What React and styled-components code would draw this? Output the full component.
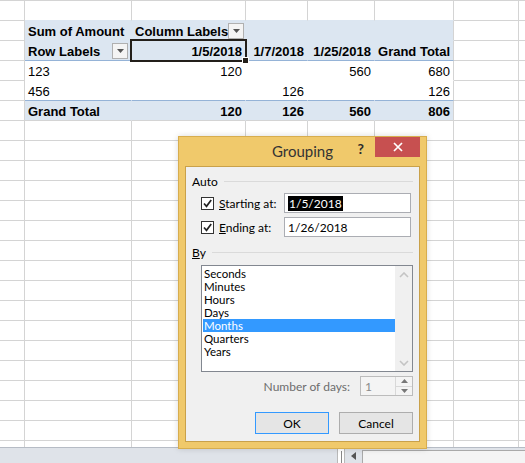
import React from "react";
import styled, { createGlobalStyle } from "styled-components";

const GlobalStyle = createGlobalStyle`
  html, body {
    margin: 0;
    padding: 0;
    background: #fff;
  }
`;

const GRID = "#d4d4d4";
const PIVOT = "#dce6f1";
const PIVOT_LINE = "#95b3d7";
const COLS = [25, 107, 114, 62, 67, 79, 65, 200];

// pivot rows: [cells B..F], each cell {t, bold, right, drop, sel}
const ROWS = [
  { kind: "top" },
  {
    kind: "head",
    cells: [
      { t: "Sum of Amount", bold: true },
      { t: "Column Labels", bold: true, drop: true },
      {},
      {},
      {},
    ],
  },
  {
    kind: "labels",
    cells: [
      { t: "Row Labels", bold: true, drop: true },
      { t: "1/5/2018", bold: true, right: true, sel: true },
      { t: "1/7/2018", bold: true, right: true },
      { t: "1/25/2018", bold: true, right: true },
      { t: "Grand Total", bold: true, right: true },
    ],
  },
  {
    kind: "data",
    cells: [{ t: "123" }, { t: "120", right: true }, {}, { t: "560", right: true }, { t: "680", right: true }],
  },
  {
    kind: "data2",
    cells: [{ t: "456" }, {}, { t: "126", right: true }, {}, { t: "126", right: true }],
  },
  {
    kind: "total",
    cells: [
      { t: "Grand Total", bold: true },
      { t: "120", bold: true, right: true },
      { t: "126", bold: true, right: true },
      { t: "560", bold: true, right: true },
      { t: "806", bold: true, right: true },
    ],
  },
];

const ITEMS = ["Seconds", "Minutes", "Hours", "Days", "Months", "Quarters", "Years"];

const Screen = styled.div`
  position: relative;
  width: 525px;
  height: 463px;
  overflow: hidden;
  display: flex;
  flex-direction: column;
  font-family: "Liberation Sans", Arial, sans-serif;
`;

const Sheet = styled.div`
  height: 447px;
  overflow: hidden;
  border-top: 1px solid ${GRID};
  box-sizing: border-box;
`;

const Row = styled.div`
  display: flex;
  height: 20px;
`;

const Cell = styled.div`
  position: relative;
  flex: 0 0 ${(p) => p.$w}px;
  height: 20px;
  box-sizing: border-box;
  border-right: 1px solid ${(p) => p.$br || GRID};
  border-bottom: 1px solid ${(p) => p.$bb || GRID};
  background: ${(p) => p.$bg || "#fff"};
  display: flex;
  align-items: center;
  justify-content: ${(p) => (p.$right ? "flex-end" : "flex-start")};
  padding: 1px 3px 0 3px;
  font-size: 13px;
  font-weight: ${(p) => (p.$bold ? 700 : 400)};
  color: #000;
  white-space: nowrap;
`;

const DropButton = styled.div`
  margin-left: auto;
  margin-right: ${(p) => p.$mr}px;
  width: 16px;
  height: 16px;
  box-sizing: border-box;
  border: 1px solid #b0b0b0;
  background: #f4f4f4;
  display: flex;
  align-items: center;
  justify-content: center;
  svg {
    display: block;
  }
`;

const Selection = styled.div`
  position: absolute;
  z-index: 2;
  left: -2px;
  top: -2px;
  right: -2px;
  bottom: -2px;
  border: 2px solid #231f1a;
  pointer-events: none;
  &::after {
    content: "";
    position: absolute;
    right: -4px;
    bottom: -4px;
    width: 5px;
    height: 5px;
    background: #231f1a;
    border: 1px solid #fff;
  }
`;

const BottomBar = styled.div`
  height: 16px;
  box-sizing: border-box;
  border-top: 1px solid #b6bcc5;
  background: #dfe3e9;
  display: flex;
  align-items: stretch;
  padding-left: 337px;
`;

const SplitHandle = styled.div`
  width: 8px;
  box-sizing: border-box;
  background: #fff;
  border: 1px solid #b9b9b9;
  border-bottom: none;
  display: flex;
  justify-content: center;
  &::before {
    content: "";
    width: 1px;
    margin-top: 2px;
    background: #888;
  }
`;

const ScrollLeft = styled.div`
  width: 17px;
  display: flex;
  align-items: center;
  justify-content: center;
`;

const Track = styled.div`
  flex: 1;
  margin-top: 2px;
  background: #f4f4f4;
  border-left: 1px solid #a9a9a9;
  border-top: 1px solid #a9a9a9;
`;

/* ---------- dialog ---------- */

const Dialog = styled.div`
  position: absolute;
  z-index: 5;
  left: 178px;
  top: 136px;
  width: 249px;
  height: 313px;
  box-sizing: border-box;
  background: #f0c96b;
  border: 1px solid #d7ad4e;
  display: flex;
  flex-direction: column;
  font-family: "Segoe UI", Lato, "Liberation Sans", sans-serif;
  font-size: 12px;
  color: #000;
  box-shadow: 0 0 6px rgba(0, 0, 0, 0.15);
`;

const TitleBar = styled.div`
  height: 29px;
  display: grid;
  grid-template-columns: 1fr auto 1fr;
  align-items: start;
`;

const Title = styled.div`
  font-size: 15px;
  color: #333;
  padding-top: 5px;
`;

const TitleButtons = styled.div`
  display: flex;
  justify-content: flex-end;
  align-items: flex-start;
  padding-right: 6px;
`;

const Help = styled.div`
  font-size: 14px;
  font-weight: 700;
  color: #2b2b2b;
  padding-top: 3px;
  margin-right: 11px;
`;

const Close = styled.div`
  width: 45px;
  height: 20px;
  background: #c75050;
  display: flex;
  align-items: center;
  justify-content: center;
`;

const Body = styled.div`
  flex: 1;
  margin: 0 6px 6px 6px;
  background: #f0f0f0;
  border: 1px solid #c9a14a;
  display: flex;
  flex-direction: column;
  padding: 7px 6px 0 6px;
`;

const GroupHead = styled.div`
  display: flex;
  align-items: center;
  height: 14px;
  margin-top: ${(p) => p.$mt}px;
  &::after {
    content: "";
    flex: 1;
    margin-left: 6px;
    border-top: 1px solid #dadada;
  }
`;

const U = styled.span`
  text-decoration: underline;
`;

const CheckRow = styled.div`
  display: flex;
  align-items: center;
  height: 20px;
  margin-top: ${(p) => p.$mt}px;
  padding-left: 9px;
`;

const Check = styled.div`
  width: 13px;
  height: 13px;
  box-sizing: border-box;
  border: 1px solid #333;
  background: #fff;
  margin-right: 5px;
  svg {
    display: block;
  }
`;

const CheckLabel = styled.div`
  width: 65px;
`;

const TextBox = styled.div`
  width: 127px;
  height: 20px;
  box-sizing: border-box;
  border: 1px solid #abadb3;
  background: #fff;
  display: flex;
  align-items: center;
  padding-left: 3px;
`;

const Highlight = styled.span`
  background: #000;
  color: #fff;
  padding: 0 1px;
`;

const ListBox = styled.div`
  margin: 6px 0 0 9px;
  height: 107px;
  box-sizing: border-box;
  border: 1px solid #828790;
  background: #fff;
  display: flex;
`;

const Items = styled.div`
  flex: 1;
  padding: 1px 0 0 1px;
`;

const Item = styled.div`
  height: 13px;
  line-height: 13px;
  font-size: 11.5px;
  padding-left: 1px;
  overflow: hidden;
  background: ${(p) => (p.$active ? "#3399ff" : "transparent")};
  color: ${(p) => (p.$active ? "#fff" : "#000")};
`;

const ScrollBar = styled.div`
  width: 17px;
  background: #f0f0f0;
  display: flex;
  flex-direction: column;
  justify-content: space-between;
  align-items: center;
  padding: 6px 0 5px;
`;

const DaysRow = styled.div`
  display: flex;
  align-items: center;
  justify-content: flex-end;
  margin-top: 4px;
  height: 20px;
`;

const DaysLabel = styled.div`
  color: #6d6d6d;
  margin-right: 10px;
`;

const Spin = styled.div`
  width: 53px;
  height: 20px;
  box-sizing: border-box;
  border: 1px solid #bcbcbc;
  background: #f4f4f4;
  display: flex;
`;

const SpinValue = styled.div`
  flex: 1;
  color: #8a8a8a;
  padding-left: 4px;
  display: flex;
  align-items: center;
`;

const SpinButtons = styled.div`
  width: 16px;
  display: flex;
  flex-direction: column;
  border-left: 1px solid #d8d8d8;
`;

const SpinHalf = styled.div`
  flex: 1;
  display: flex;
  align-items: center;
  justify-content: center;
  border-top: ${(p) => (p.$lower ? "1px solid #d8d8d8" : "none")};
`;

const Buttons = styled.div`
  display: flex;
  justify-content: flex-end;
  gap: 10px;
  margin-top: 16px;
`;

const Button = styled.div`
  width: 74px;
  height: 22px;
  box-sizing: border-box;
  border: 1px solid ${(p) => (p.$primary ? "#3399ff" : "#adadad")};
  background: #e5e5e5;
  display: flex;
  align-items: center;
  justify-content: center;
`;

const DownTri = ({ color = "#555" }) => (
  <svg width="7" height="4" viewBox="0 0 7 4">
    <polygon points="0,0 7,0 3.5,4" fill={color} />
  </svg>
);

const Chevron = ({ up }) => (
  <svg width="10" height="6" viewBox="0 0 10 6">
    <polyline
      points={up ? "1,5 5,1 9,5" : "1,1 5,5 9,1"}
      fill="none"
      stroke="#c4c4c4"
      strokeWidth="1.6"
    />
  </svg>
);

const CheckMark = () => (
  <svg width="11" height="11" viewBox="0 0 11 11">
    <path d="M2 5.5 L4.5 8.3 L9.2 2" fill="none" stroke="#222" strokeWidth="1.7" />
  </svg>
);

function pivotCellProps(kind, last) {
  const edge = last ? GRID : null;
  switch (kind) {
    case "top":
      return { bb: PIVOT };
    case "head":
      return { bg: PIVOT, br: edge || PIVOT, bb: PIVOT };
    case "labels":
      return { bg: PIVOT, br: edge || PIVOT, bb: PIVOT_LINE };
    case "data":
      return { br: edge || "#fff", bb: "#fff" };
    case "data2":
      return { br: edge || "#fff", bb: PIVOT_LINE };
    case "total":
      return { bg: PIVOT, br: edge || PIVOT };
    default:
      return {};
  }
}

function SheetRow({ row }) {
  const out = [<Cell key="a" $w={COLS[0]} />];
  for (let i = 0; i < 5; i++) {
    const p = row ? pivotCellProps(row.kind, i === 4) : {};
    const c = (row && row.cells && row.cells[i]) || {};
    out.push(
      <Cell
        key={i}
        $w={COLS[i + 1]}
        $bg={p.bg}
        $br={p.br}
        $bb={p.bb}
        $bold={c.bold}
        $right={c.right}
      >
        {c.t}
        {c.drop && (
          <DropButton $mr={i === 0 ? 0 : -2}>
            <DownTri />
          </DropButton>
        )}
        {c.sel && <Selection />}
      </Cell>
    );
  }
  out.push(<Cell key="g" $w={COLS[6]} />);
  out.push(<Cell key="h" $w={COLS[7]} />);
  return <Row>{out}</Row>;
}

function Grouping() {
  return (
    <Dialog>
      <TitleBar>
        <div />
        <Title>Grouping</Title>
        <TitleButtons>
          <Help>?</Help>
          <Close>
            <svg width="10" height="10" viewBox="0 0 10 10">
              <path d="M1 1 L9 9 M9 1 L1 9" stroke="#fff" strokeWidth="1.7" />
            </svg>
          </Close>
        </TitleButtons>
      </TitleBar>
      <Body>
        <GroupHead $mt={0}>Auto</GroupHead>
        <CheckRow $mt={5}>
          <Check>
            <CheckMark />
          </Check>
          <CheckLabel>
            <U>S</U>tarting at:
          </CheckLabel>
          <TextBox>
            <Highlight>1/5/2018</Highlight>
          </TextBox>
        </CheckRow>
        <CheckRow $mt={4}>
          <Check>
            <CheckMark />
          </Check>
          <CheckLabel>
            <U>E</U>nding at:
          </CheckLabel>
          <TextBox>1/26/2018</TextBox>
        </CheckRow>
        <GroupHead $mt={8}>
          <U>B</U>y
        </GroupHead>
        <ListBox>
          <Items>
            {ITEMS.map((it) => (
              <Item key={it} $active={it === "Months"}>
                {it}
              </Item>
            ))}
          </Items>
          <ScrollBar>
            <Chevron up />
            <Chevron />
          </ScrollBar>
        </ListBox>
        <DaysRow>
          <DaysLabel>Number of days:</DaysLabel>
          <Spin>
            <SpinValue>1</SpinValue>
            <SpinButtons>
              <SpinHalf>
                <svg width="7" height="4" viewBox="0 0 7 4">
                  <polygon points="0,4 7,4 3.5,0" fill="#777" />
                </svg>
              </SpinHalf>
              <SpinHalf $lower>
                <DownTri color="#777" />
              </SpinHalf>
            </SpinButtons>
          </Spin>
        </DaysRow>
        <Buttons>
          <Button $primary>OK</Button>
          <Button>Cancel</Button>
        </Buttons>
      </Body>
    </Dialog>
  );
}

export default function App() {
  const rows = Array.from({ length: 23 }, (_, i) => ROWS[i] || null);
  return (
    <>
      <GlobalStyle />
      <Screen>
        <Sheet>
          {rows.map((r, i) => (
            <SheetRow key={i} row={r} />
          ))}
        </Sheet>
        <BottomBar>
          <SplitHandle />
          <ScrollLeft>
            <svg width="5" height="8" viewBox="0 0 5 8">
              <polygon points="5,0 5,8 0,4" fill="#555" />
            </svg>
          </ScrollLeft>
          <Track />
        </BottomBar>
        <Grouping />
      </Screen>
    </>
  );
}
